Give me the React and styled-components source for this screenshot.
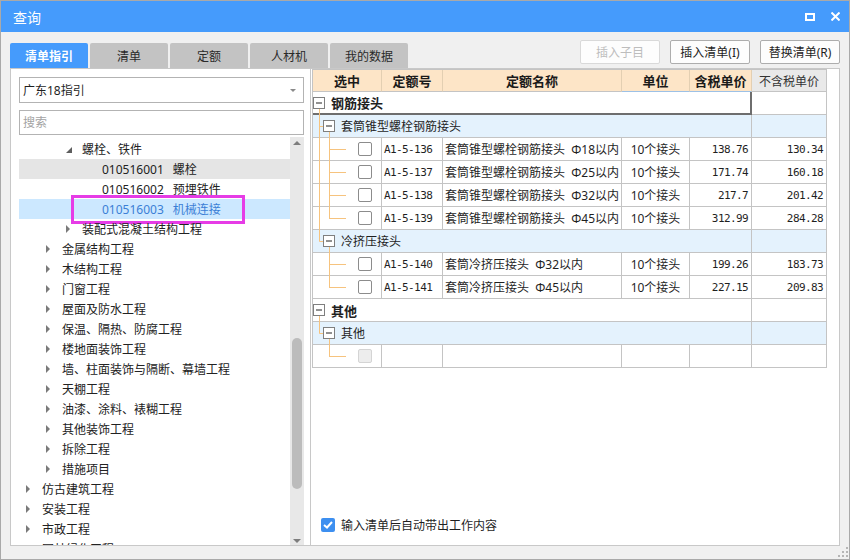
import React from 'react';
import styled, { createGlobalStyle } from 'styled-components';

const GlobalStyle = createGlobalStyle`
  html, body { margin: 0; padding: 0; background: #fff; }
  body {
    font-family: "Noto Sans", "Noto Sans CJK SC", sans-serif;
    font-size: 12px;
    color: #1f1f1f;
  }
  *, *::before, *::after { box-sizing: border-box; }
`;

const LINE = '#f6c37e';

const Window = styled.div`
  width: 850px;
  height: 560px;
  display: flex;
  flex-direction: column;
  background: #f0f0f0;
  border: 1px solid #a9a9a9;
  overflow: hidden;
`;

const TitleBar = styled.div`
  height: 31px;
  flex-shrink: 0;
  display: flex;
  align-items: center;
  gap: 16px;
  padding: 0 9px 0 12px;
  background: #459bfc;
  color: #fff;
  font-size: 14px;
`;

const Title = styled.div`
  flex: 1;
`;

const MaxIcon = styled.span`
  width: 10px;
  height: 8px;
  border: 2px solid #fff;
`;

const Toolbar = styled.div`
  height: 36px;
  flex-shrink: 0;
  display: flex;
  justify-content: space-between;
  padding: 0 9px;
`;

const Tabs = styled.div`
  align-self: flex-end;
  display: flex;
  gap: 2px;
`;

const Tab = styled.div`
  width: 78px;
  height: 25px;
  display: flex;
  align-items: center;
  justify-content: center;
  border-radius: 2px 2px 0 0;
  background: ${p => (p.$active ? '#459bfc' : '#c3c3c3')};
  color: ${p => (p.$active ? '#fff' : '#2a2a2a')};
  font-weight: ${p => (p.$active ? 600 : 400)};
`;

const Buttons = styled.div`
  margin-top: 8px;
  display: flex;
  gap: 10px;
`;

const Button = styled.div`
  width: 80px;
  height: 24px;
  display: flex;
  align-items: center;
  justify-content: center;
  background: #fdfdfd;
  border: 1px solid ${p => (p.$disabled ? '#d9d9d9' : '#adadad')};
  border-radius: 2px;
  color: ${p => (p.$disabled ? '#bdbdbd' : '#1f1f1f')};
`;

const Panel = styled.div`
  height: 478px;
  flex-shrink: 0;
  margin: 0 9px;
  display: flex;
  background: #fff;
  border: 1px solid #c8c8c8;
`;

const LeftPane = styled.div`
  width: 299px;
  display: flex;
  flex-direction: column;
  padding: 8px 6px 0 8px;
`;

const Select = styled.div`
  height: 26px;
  display: flex;
  align-items: center;
  justify-content: space-between;
  padding: 0 7px 0 3px;
  border: 1px solid #b3b3b3;
`;

const Caret = styled.span`
  border-top: 3px solid #8a8a8a;
  border-left: 3px solid transparent;
  border-right: 3px solid transparent;
`;

const Search = styled.input`
  height: 25px;
  margin-top: 7px;
  padding: 0 3px;
  border: 1px solid #b3b3b3;
  font: inherit;
  outline: none;
  &::placeholder { color: #a3a3a3; }
`;

const TreeWrap = styled.div`
  flex: 1;
  min-height: 0;
  margin-top: 2px;
  display: flex;
`;

const TreeList = styled.div`
  flex: 1;
  overflow: hidden;
  padding-top: 2px;
`;

const TreeRow = styled.div`
  position: relative;
  height: 20px;
  display: flex;
  align-items: center;
  padding-left: ${p => 7 + p.$level * 20}px;
  white-space: nowrap;
  background: ${p => (p.$tone === 'selected' ? '#cce8ff' : p.$tone === 'hover' ? '#e5e5e5' : 'transparent')};
  color: ${p => (p.$tone === 'selected' ? '#3b7fd6' : '#222')};
`;

const Toggle = styled.span`
  width: 16px;
  flex-shrink: 0;
  display: flex;
  align-items: center;
`;

const Collapsed = styled.span`
  border-left: 4px solid #7a7a7a;
  border-top: 4px solid transparent;
  border-bottom: 4px solid transparent;
`;

const Expanded = styled.span`
  margin-top: 1px;
  border-bottom: 6px solid #5e5e5e;
  border-left: 6px solid transparent;
`;

const Code = styled.span`
  margin-right: 9px;
`;

const Mark = styled.div`
  position: absolute;
  left: 52px;
  top: -4px;
  width: 174px;
  height: 29px;
  border: 3px solid #e63ce6;
`;

const ScrollBar = styled.div`
  width: 14px;
  display: flex;
  flex-direction: column;
  align-items: center;
  background: #e8e8e8;
`;

const ArrowUp = styled.span`
  margin-top: 4px;
  border-bottom: 4px solid #7d7d7d;
  border-left: 4px solid transparent;
  border-right: 4px solid transparent;
`;

const ArrowDown = styled.span`
  margin-bottom: 2px;
  border-top: 4px solid #7d7d7d;
  border-left: 4px solid transparent;
  border-right: 4px solid transparent;
`;

const Track = styled.div`
  flex: 1;
`;

const Thumb = styled.div`
  width: 10px;
  border-radius: 5px;
  background: #bcbcbc;
`;

const RightPane = styled.div`
  flex: 1;
  display: flex;
  flex-direction: column;
  border-left: 1px solid #c8c8c8;
  padding-left: 1px;
`;

const Grid = styled.div`
  display: grid;
  grid-template-columns: 69px 61px 179px 68px 62px 75px;
  width: 515px;
  border-left: 1px solid #c4c4c4;
  border-top: 1px solid #c4c4c4;
`;

const Head = styled.div`
  height: 22px;
  display: flex;
  align-items: center;
  justify-content: center;
  border-right: 1px solid ${p => (p.$plain ? '#c4c4c4' : '#e3cfb2')};
  border-bottom: 1px solid ${p => (p.$blue ? '#9dc1e6' : '#c4c4c4')};
  background: ${p => (p.$plain ? '#e9e9e9' : '#fde5c7')};
  font-size: ${p => (p.$plain ? 12 : 13)}px;
  font-weight: ${p => (p.$plain ? 400 : 700)};
  color: ${p => (p.$plain ? '#333' : '#1a1a1a')};
`;

const Cell = styled.div`
  height: 23px;
  display: flex;
  align-items: center;
  overflow: hidden;
  white-space: pre;
  border-right: 1px solid #c4c4c4;
  border-bottom: 1px solid #c4c4c4;
  background: ${p => (p.$sub ? '#e4f2fd' : '#fff')};
  justify-content: ${p => (p.$align === 'right' ? 'flex-end' : p.$align === 'center' ? 'center' : 'flex-start')};
  padding: ${p => (p.$align === 'right' ? '0 3px 0 0' : p.$align === 'center' ? '0' : '0 0 0 2px')};
`;

const TreeCell = styled(Cell)`
  grid-column: ${p => (p.$span ? `span ${p.$span}` : 'auto')};
  padding: 0;
  overflow: visible;
  font-size: ${p => (p.$bold ? 13 : 12)}px;
  font-weight: ${p => (p.$bold ? 700 : 400)};
  ${p => p.$focused && `
    border-right: 2px solid #6e6e6e;
    border-bottom: 2px solid #6e6e6e;
  `}
`;

const Mono = styled.span`
  font-family: "DejaVu Sans Mono", "Liberation Mono", monospace;
  font-size: 11px;
  letter-spacing: -0.6px;
`;

const Svg = styled.svg`
  display: block;
  flex-shrink: 0;
  overflow: visible;
`;

const Check = styled.span`
  width: 14px;
  height: 14px;
  flex-shrink: 0;
  border-radius: 2px;
  border: 1px solid ${p => (p.$disabled ? '#d4d4d4' : '#8c8c8c')};
  background: ${p => (p.$disabled ? '#ededed' : '#fff')};
`;

const CheckRow = styled.div`
  margin-top: auto;
  display: flex;
  align-items: center;
  gap: 6px;
  padding: 0 0 11px 9px;
`;

const Checked = styled.span`
  width: 14px;
  height: 14px;
  display: flex;
  align-items: center;
  justify-content: center;
  border-radius: 2px;
  background: #3d8ff0;
`;

const Footer = styled.div`
  flex: 1;
  display: flex;
  justify-content: flex-end;
  align-items: flex-end;
  padding: 0 1px 2px 0;
`;

const tabs = ['清单指引', '清单', '定额', '人材机', '我的数据'];

const treeRows = [
  { level: 2, label: '螺栓、铁件', toggle: 'open' },
  { level: 3, code: '010516001', label: '螺栓', tone: 'hover' },
  { level: 3, code: '010516002', label: '预埋铁件' },
  { level: 3, code: '010516003', label: '机械连接', tone: 'selected', marked: true },
  { level: 2, label: '装配式混凝土结构工程', toggle: 'closed' },
  { level: 1, label: '金属结构工程', toggle: 'closed' },
  { level: 1, label: '木结构工程', toggle: 'closed' },
  { level: 1, label: '门窗工程', toggle: 'closed' },
  { level: 1, label: '屋面及防水工程', toggle: 'closed' },
  { level: 1, label: '保温、隔热、防腐工程', toggle: 'closed' },
  { level: 1, label: '楼地面装饰工程', toggle: 'closed' },
  { level: 1, label: '墙、柱面装饰与隔断、幕墙工程', toggle: 'closed' },
  { level: 1, label: '天棚工程', toggle: 'closed' },
  { level: 1, label: '油漆、涂料、裱糊工程', toggle: 'closed' },
  { level: 1, label: '其他装饰工程', toggle: 'closed' },
  { level: 1, label: '拆除工程', toggle: 'closed' },
  { level: 1, label: '措施项目', toggle: 'closed' },
  { level: 0, label: '仿古建筑工程', toggle: 'closed' },
  { level: 0, label: '安装工程', toggle: 'closed' },
  { level: 0, label: '市政工程', toggle: 'closed' },
  { level: 0, label: '园林绿化工程', toggle: 'closed' },
];

const rows = [
  { type: 'group', label: '钢筋接头', focused: true },
  { type: 'sub', label: '套筒锥型螺栓钢筋接头', outer: true },
  { type: 'item', outer: true, code: 'A1-5-136', name: '套筒锥型螺栓钢筋接头  Φ18以内', unit: '10个接头', tax: '138.76', net: '130.34' },
  { type: 'item', outer: true, code: 'A1-5-137', name: '套筒锥型螺栓钢筋接头  Φ25以内', unit: '10个接头', tax: '171.74', net: '160.18' },
  { type: 'item', outer: true, code: 'A1-5-138', name: '套筒锥型螺栓钢筋接头  Φ32以内', unit: '10个接头', tax: '217.7', net: '201.42' },
  { type: 'item', outer: true, last: true, code: 'A1-5-139', name: '套筒锥型螺栓钢筋接头  Φ45以内', unit: '10个接头', tax: '312.99', net: '284.28' },
  { type: 'sub', label: '冷挤压接头' },
  { type: 'item', code: 'A1-5-140', name: '套筒冷挤压接头  Φ32以内', unit: '10个接头', tax: '199.26', net: '183.73' },
  { type: 'item', last: true, code: 'A1-5-141', name: '套筒冷挤压接头  Φ45以内', unit: '10个接头', tax: '227.15', net: '209.83' },
  { type: 'group', label: '其他' },
  { type: 'sub', label: '其他' },
  { type: 'item', last: true, empty: true },
];

function Box({ x }) {
  return (
    <>
      <rect x={x + 0.5} y={5.5} width={11} height={11} fill="#fff" stroke="#7f7f7f" />
      <line x1={x + 3} y1={11} x2={x + 9} y2={11} stroke="#222" />
    </>
  );
}

function Connector({ row }) {
  const width = row.type === 'group' ? 18 : row.type === 'sub' ? 28 : 45;
  return (
    <Svg width={width} height={22}>
      {row.type === 'group' && (
        <>
          <line x1={6.5} y1={17} x2={6.5} y2={23} stroke={LINE} />
          <Box x={0} />
        </>
      )}
      {row.type === 'sub' && (
        <>
          <line x1={6.5} y1={0} x2={6.5} y2={row.outer ? 23 : 11.5} stroke={LINE} />
          <line x1={6.5} y1={11.5} x2={10} y2={11.5} stroke={LINE} />
          <line x1={16.5} y1={17} x2={16.5} y2={23} stroke={LINE} />
          <Box x={10} />
        </>
      )}
      {row.type === 'item' && (
        <>
          {row.outer && <line x1={6.5} y1={0} x2={6.5} y2={23} stroke={LINE} />}
          <line x1={16.5} y1={0} x2={16.5} y2={row.last ? 12 : 23} stroke={LINE} />
          <line x1={16.5} y1={11.5} x2={33} y2={11.5} stroke={LINE} />
        </>
      )}
    </Svg>
  );
}

function TableRow({ row }) {
  if (row.type !== 'item') {
    const sub = row.type === 'sub';
    return (
      <>
        <TreeCell $span={5} $sub={sub} $bold={!sub} $focused={row.focused}>
          <Connector row={row} />
          {row.label}
        </TreeCell>
        <Cell $sub={sub} />
      </>
    );
  }
  return (
    <>
      <TreeCell>
        <Connector row={row} />
        <Check $disabled={row.empty} />
      </TreeCell>
      <Cell><Mono>{row.code}</Mono></Cell>
      <Cell>{row.name}</Cell>
      <Cell $align="center">{row.unit}</Cell>
      <Cell $align="right"><Mono>{row.tax}</Mono></Cell>
      <Cell $align="right"><Mono>{row.net}</Mono></Cell>
    </>
  );
}

export default function App() {
  return (
    <>
      <GlobalStyle />
      <Window>
        <TitleBar>
          <Title>查询</Title>
          <MaxIcon />
          <svg width="9" height="9" viewBox="0 0 9 9">
            <path d="M0.5 0.5 L8.5 8.5 M8.5 0.5 L0.5 8.5" stroke="#fff" strokeWidth="2" />
          </svg>
        </TitleBar>

        <Toolbar>
          <Tabs>
            {tabs.map((t, i) => (
              <Tab key={t} $active={i === 0}>{t}</Tab>
            ))}
          </Tabs>
          <Buttons>
            <Button $disabled>插入子目</Button>
            <Button>插入清单(I)</Button>
            <Button>替换清单(R)</Button>
          </Buttons>
        </Toolbar>

        <Panel>
          <LeftPane>
            <Select>
              <span>广东18指引</span>
              <Caret />
            </Select>
            <Search placeholder="搜索" />
            <TreeWrap>
              <TreeList>
                {treeRows.map(r => (
                  <TreeRow key={r.label} $level={r.level} $tone={r.tone}>
                    <Toggle>
                      {r.toggle === 'closed' && <Collapsed />}
                      {r.toggle === 'open' && <Expanded />}
                    </Toggle>
                    {r.code && <Code>{r.code}</Code>}
                    {r.label}
                    {r.marked && <Mark />}
                  </TreeRow>
                ))}
              </TreeList>
              <ScrollBar>
                <ArrowUp />
                <Track>
                  <Thumb style={{ marginTop: 193, height: 151 }} />
                </Track>
                <ArrowDown />
              </ScrollBar>
            </TreeWrap>
          </LeftPane>

          <RightPane>
            <Grid>
              <Head>选中</Head>
              <Head>定额号</Head>
              <Head>定额名称</Head>
              <Head $blue>单位</Head>
              <Head $blue>含税单价</Head>
              <Head $plain>不含税单价</Head>
              {rows.map((row, i) => (
                <TableRow key={i} row={row} />
              ))}
            </Grid>
            <CheckRow>
              <Checked>
                <svg width="10" height="8" viewBox="0 0 10 8">
                  <path d="M1 4 L4 6.5 L9 1" fill="none" stroke="#fff" strokeWidth="2" />
                </svg>
              </Checked>
              输入清单后自动带出工作内容
            </CheckRow>
          </RightPane>
        </Panel>

        <Footer>
          <svg width="10" height="10" viewBox="0 0 10 10">
            <rect x="8" y="0" width="2" height="2" fill="#b5b5b5" />
            <rect x="4" y="4" width="2" height="2" fill="#b5b5b5" />
            <rect x="8" y="4" width="2" height="2" fill="#b5b5b5" />
            <rect x="0" y="8" width="2" height="2" fill="#b5b5b5" />
            <rect x="4" y="8" width="2" height="2" fill="#b5b5b5" />
            <rect x="8" y="8" width="2" height="2" fill="#b5b5b5" />
          </svg>
        </Footer>
      </Window>
    </>
  );
}
